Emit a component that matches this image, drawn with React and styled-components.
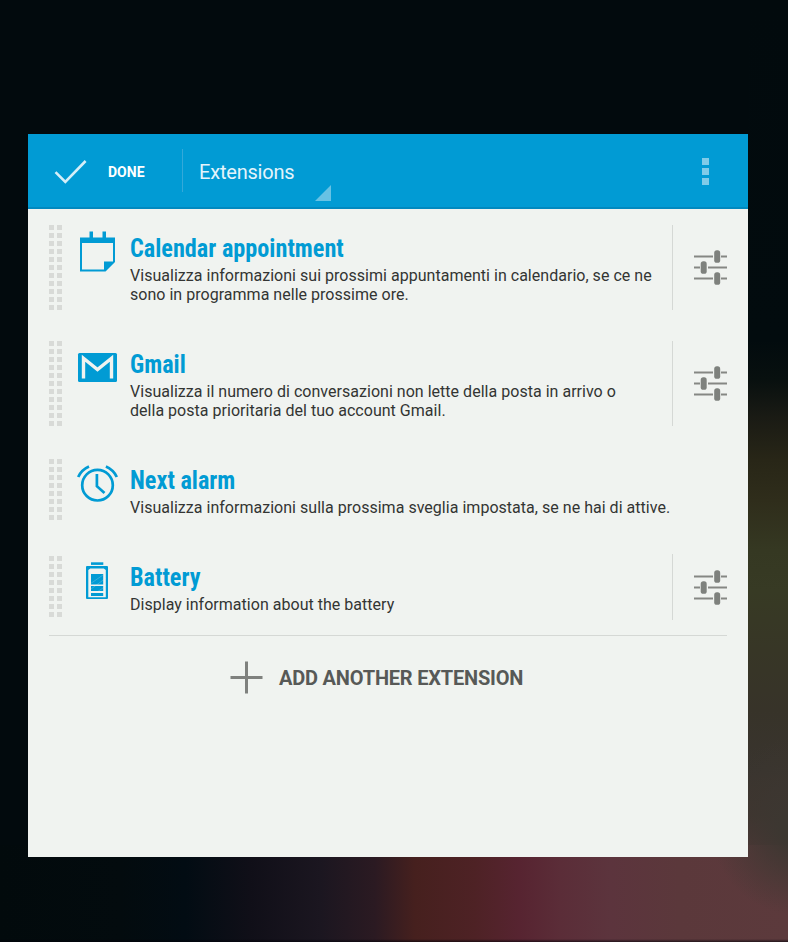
import React from "react";
import styled, { createGlobalStyle } from "styled-components";

const BLUE = "#019bd4";

const GlobalStyle = createGlobalStyle`
  * { box-sizing: border-box; }
  body {
    margin: 0;
    background: #020a0d;
    font-family: Roboto, "Liberation Sans", sans-serif;
  }
`;

const Wallpaper = styled.main`
  height: 942px;
  padding: 134px 40px 85px 28px;
  overflow: hidden;
  background:
    linear-gradient(to bottom, transparent 939px, rgba(0, 0, 8, 0.6) 942px),
    radial-gradient(ellipse 90px 90px at 800px 826px, #3c3731 20%, transparent 100%),
    linear-gradient(to right, #020a0c 0, #030b0e 120px, #020c13 185px, #100f18 250px, #1b1620 320px, #2b1a22 375px, #46201e 415px, #4e2225 475px, #572431 520px, #5b2d38 560px, #5c343d 610px, #5b383b 680px, #5c3a3c 788px) 0 845px / 788px 97px no-repeat,
    linear-gradient(to bottom, #020a0d 0, #020b0e 340px, #08100f 380px, #191a14 415px, #282617 460px, #2f2d1b 500px, #353822 550px, #373a24 590px, #373626 650px, #373329 710px, #39342e 770px, #40342f 815px, #563739 855px) 748px 0 / 40px 845px no-repeat,
    #020a0d;
`;

const Panel = styled.section`
  width: 720px;
  height: 723px;
  background: #f0f3f0;
`;

const ActionBar = styled.header`
  display: flex;
  align-items: center;
  height: 75px;
  border-bottom: 2px solid #0189bf;
  background: ${BLUE};
  color: #fff;
`;

const DoneButton = styled.button`
  display: flex;
  align-items: center;
  gap: 21px;
  width: 154px;
  height: 100%;
  padding: 3px 0 0 26px;
  border: 0;
  background: none;
  color: inherit;
  font: 700 14px/20px Roboto, sans-serif;
`;

const BarDivider = styled.span`
  width: 1px;
  height: 43px;
  background: #34a9d9;
`;

const Spinner = styled.button`
  display: flex;
  justify-content: space-between;
  align-items: flex-end;
  width: 148px;
  height: 100%;
  padding: 0 0 6px 16px;
  border: 0;
  background: none;
  color: #e4f4fb;
  font: 400 20px/24px Roboto, sans-serif;
  letter-spacing: -0.2px;
`;

const SpinnerLabel = styled.span`
  padding-bottom: 17px;
`;

const Overflow = styled.button`
  display: grid;
  gap: 3px;
  margin: 2px 39px 0 auto;
  padding: 0;
  border: 0;
  background: none;
`;

const OverflowDot = styled.i`
  width: 7px;
  height: 7px;
  background: #80cbe8;
`;

const List = styled.ul`
  margin: 0 21px;
  padding: 0;
  border-bottom: 1px solid #d5d8d5;
  list-style: none;
`;

const Item = styled.li`
  display: flex;
  height: ${(p) => (p.$tall ? 116 : 97)}px;
  padding: 16px 0 15px;
`;

const Grip = styled.span`
  flex: none;
  width: 13px;
  height: ${(p) => (p.$tall ? 85 : 61)}px;
  margin-top: ${(p) => (p.$tall ? 0 : 2)}px;
  background:
    linear-gradient(to right, transparent 5px, #f0f3f0 5px, #f0f3f0 8px, transparent 8px),
    repeating-linear-gradient(to bottom, #d8dad7 0 5px, transparent 5px 8px);
`;

const IconSlot = styled.span`
  flex: none;
  width: 48px;
  height: 48px;
  margin: 2px 9px 0 11px;
`;

const Body = styled.div`
  flex: 1;
  padding-top: 8px;
  white-space: nowrap;
`;

const Title = styled.h2`
  width: max-content;
  margin: 0;
  color: ${BLUE};
  font: 700 26px/30px "Roboto Condensed", Roboto, sans-serif;
  transform: scaleX(0.932);
  transform-origin: left;
`;

const Description = styled.p`
  margin: 3px 0 0;
  color: #333533;
  font-size: 16px;
  line-height: 19px;
  letter-spacing: 0.025px;
`;

const Settings = styled.button`
  display: flex;
  align-items: center;
  justify-content: flex-end;
  width: 55px;
  padding: 0;
  border: 0;
  border-left: 1px solid #d5d8d5;
  background: none;
`;

const AddButton = styled.button`
  display: flex;
  align-items: center;
  gap: 16px;
  margin: 25px 0 0 202px;
  padding: 0;
  border: 0;
  background: none;
  color: #575957;
  font: 700 20px/33px Roboto, sans-serif;
  letter-spacing: -0.2px;
  white-space: nowrap;
`;

const AddLabel = styled.span`
  padding-top: 1px;
  margin-bottom: -1px;
`;

const Svg = styled.svg`
  display: block;
  flex: none;
`;

const CheckIcon = () => (
  <Svg width="33" height="26" fill="none" stroke="#d5eef8" strokeWidth="2.6">
    <path d="M1.5 13.2 11.3 23 31.6 2" />
  </Svg>
);

const CalendarIcon = () => (
  <Svg width="48" height="48" fill={BLUE}>
    <path d="M16.500 4.500h3.500v6.500H16.500zM29.500 4.500h3.500v6.500H29.500zM7 10.500h35v5.500H7z" />
    <path fillRule="evenodd" d="M7 15h35v20L32.500 44.500H7zM9 16v26.500h22V34.500h9V16z" />
  </Svg>
);

const MailIcon = () => (
  <Svg width="48" height="48">
    <rect x="5" y="10" width="39" height="29" rx="1.500" fill={BLUE} />
    <path d="M10.500 35.500V15.200L24.500 26.500 38.500 15.200V35.500" fill="none" stroke="#f0f3f0" strokeWidth="3.400" />
  </Svg>
);

const AlarmIcon = () => (
  <Svg width="48" height="48" fill="none" stroke={BLUE} strokeWidth="2.700">
    <circle cx="24.500" cy="26.200" r="15.300" />
    <path d="M23.900 15v12.200L31.500 34" />
    <path d="M5.200 18Q8.500 10.800 16 7.500M32.900 7.500Q40.500 10.800 43.800 18" />
  </Svg>
);

const BatteryIcon = () => (
  <Svg width="48" height="48" fill={BLUE}>
    <path d="M18 6.300h12.300v2.600H18z" />
    <path fillRule="evenodd" d="M14 10h20a1 1 0 0 1 1 1v31a1 1 0 0 1-1 1H14a1 1 0 0 1-1-1V11a1 1 0 0 1 1-1zM15.300 14v27.300h17.500V14l-2-1.400H17.300z" />
    <path d="M18 18h12.200v10.500H18zM18 30h12.200v5H18zM18 37h12.200v3H18z" />
    <path d="m17 28 13-9M18 33l15-11M24 36l9-6" stroke="#f0f3f0" strokeWidth=".4" opacity=".55" />
  </Svg>
);

const TuneIcon = () => (
  <Svg width="33" height="35">
    <path d="M0 6.500h19M27 6.500h6M0 17.500h6M14 17.500h19M0 28.500h19M27 28.500h6" stroke="#858783" strokeWidth="2" />
    <g fill="#7e817d">
      <rect x="20.200" y=".3" width="6" height="12.500" rx="2.600" />
      <rect x="6.700" y="11.300" width="6" height="12.500" rx="2.600" />
      <rect x="20.200" y="22.300" width="6" height="12.500" rx="2.600" />
    </g>
  </Svg>
);

const PlusIcon = () => (
  <Svg width="33" height="33" stroke="#7f817e" strokeWidth="3">
    <path d="M16.500 .5v32M.5 16.500h32" />
  </Svg>
);

const extensions = [
  {
    title: "Calendar appointment",
    icon: CalendarIcon,
    lines: ["Visualizza informazioni sui prossimi appuntamenti in calendario, se ce ne", "sono in programma nelle prossime ore."],
    settings: true,
  },
  {
    title: "Gmail",
    icon: MailIcon,
    lines: ["Visualizza il numero di conversazioni non lette della posta in arrivo o", "della posta prioritaria del tuo account Gmail."],
    settings: true,
  },
  {
    title: "Next alarm",
    icon: AlarmIcon,
    lines: ["Visualizza informazioni sulla prossima sveglia impostata, se ne hai di attive."],
    settings: false,
  },
  {
    title: "Battery",
    icon: BatteryIcon,
    lines: ["Display information about the battery"],
    settings: true,
  },
];

function ExtensionItem({ title, icon: Icon, lines, settings }) {
  const tall = lines.length > 1;
  return (
    <Item $tall={tall}>
      <Grip $tall={tall} />
      <IconSlot>
        <Icon />
      </IconSlot>
      <Body>
        <Title>{title}</Title>
        <Description>
          {lines.map((line, i) => (
            <React.Fragment key={line}>
              {i > 0 && <br />}
              {line}
            </React.Fragment>
          ))}
        </Description>
      </Body>
      {settings && (
        <Settings aria-label="Settings">
          <TuneIcon />
        </Settings>
      )}
    </Item>
  );
}

export default function App() {
  return (
    <>
      <GlobalStyle />
      <Wallpaper>
        <Panel>
          <ActionBar>
            <DoneButton>
              <CheckIcon />
              DONE
            </DoneButton>
            <BarDivider />
            <Spinner>
              <SpinnerLabel>Extensions</SpinnerLabel>
              <Svg width="16" height="16">
                <path d="M16 0v16H0z" fill="#67c2e4" />
              </Svg>
            </Spinner>
            <Overflow aria-label="More options">
              <OverflowDot />
              <OverflowDot />
              <OverflowDot />
            </Overflow>
          </ActionBar>
          <List>
            {extensions.map((item) => (
              <ExtensionItem key={item.title} {...item} />
            ))}
          </List>
          <AddButton>
            <PlusIcon />
            <AddLabel>ADD ANOTHER EXTENSION</AddLabel>
          </AddButton>
        </Panel>
      </Wallpaper>
    </>
  );
}
